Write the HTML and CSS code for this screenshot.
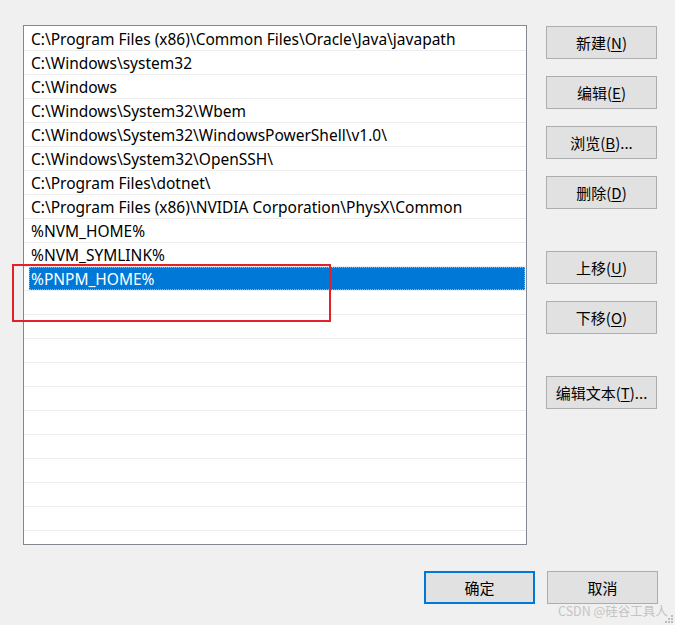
FILE: index.html
```html
<!DOCTYPE html>
<html lang="zh">
<head>
<meta charset="utf-8">
<link rel="stylesheet" href="styles.css">
</head>
<body>
<div class="dialog">
  <div class="main">
    <div class="list">
      <div class="row"><span class="item">C:\Program Files (x86)\Common Files\Oracle\Java\javapath</span></div>
      <div class="row"><span class="item">C:\Windows\system32</span></div>
      <div class="row"><span class="item">C:\Windows</span></div>
      <div class="row"><span class="item">C:\Windows\System32\Wbem</span></div>
      <div class="row"><span class="item">C:\Windows\System32\WindowsPowerShell\v1.0\</span></div>
      <div class="row"><span class="item">C:\Windows\System32\OpenSSH\</span></div>
      <div class="row"><span class="item">C:\Program Files\dotnet\</span></div>
      <div class="row"><span class="item">C:\Program Files (x86)\NVIDIA Corporation\PhysX\Common</span></div>
      <div class="row"><span class="item">%NVM_HOME%</span></div>
      <div class="row"><span class="item">%NVM_SYMLINK%</span></div>
      <div class="row"><span class="item selected">%PNPM_HOME%</span></div>
      <div class="row"><span class="item"></span></div>
      <div class="row"><span class="item"></span></div>
      <div class="row"><span class="item"></span></div>
      <div class="row"><span class="item"></span></div>
      <div class="row"><span class="item"></span></div>
      <div class="row"><span class="item"></span></div>
      <div class="row"><span class="item"></span></div>
      <div class="row"><span class="item"></span></div>
      <div class="row"><span class="item"></span></div>
      <div class="row"><span class="item"></span></div>
      <div class="row last"><span class="item"></span></div>
    </div>
    <div class="side">
      <div class="group">
        <button class="btn">新建(<u>N</u>)</button>
        <button class="btn">编辑(<u>E</u>)</button>
        <button class="btn">浏览(<u>B</u>)...</button>
        <button class="btn">删除(<u>D</u>)</button>
      </div>
      <div class="group">
        <button class="btn">上移(<u>U</u>)</button>
        <button class="btn">下移(<u>O</u>)</button>
      </div>
      <div class="group">
        <button class="btn">编辑文本(<u>T</u>)...</button>
      </div>
    </div>
  </div>
  <div class="footer">
    <button class="btn primary">确定</button>
    <button class="btn">取消</button>
  </div>
  <div class="highlight-box"></div>
  <div class="watermark">CSDN @硅谷工具人</div>
  <div class="grip">
    <i></i><i></i><i></i><i></i><i></i><i></i>
  </div>
</div>
</body>
</html>
```

FILE: styles.css
```css
* { box-sizing: border-box; }
html, body {
  margin: 0;
  padding: 0;
  background: #f0f0f0;
}
body {
  width: 675px;
  height: 625px;
  overflow: hidden;
  font-family: "Noto Sans", "Noto Sans CJK SC", sans-serif;
  color: #000;
}
.dialog {
  position: relative;
  width: 675px;
  height: 625px;
  padding: 25px 0 0 23px;
}
.main {
  display: flex;
  align-items: flex-start;
}
.list {
  width: 504px;
  height: 520px;
  border: 1px solid #828790;
  background: #fff;
  padding-top: 1px;
  overflow: hidden;
}
.row {
  height: 24px;
  border-bottom: 1px solid #ececec;
  display: flex;
  padding: 0 1px 0 5px;
}
.item {
  flex: 1;
  display: block;
  height: 23px;
  line-height: 24px;
  padding-left: 2px;
  font-size: 15.5px;
  white-space: nowrap;
  color: #000;
}
.item.selected {
  background: #0078d7;
  color: #fff;
  outline: 1px dotted #f0a060;
  outline-offset: -1px;
}
.side {
  margin-left: 19px;
  padding-top: 1px;
  display: flex;
  flex-direction: column;
  gap: 42px;
}
.group {
  display: flex;
  flex-direction: column;
  gap: 17px;
}
.btn {
  width: 111px;
  height: 33px;
  margin: 0;
  padding: 0;
  background: #e1e1e1;
  border: 1px solid #adadad;
  font-family: "Noto Sans CJK SC", "Noto Sans", sans-serif;
  font-size: 15px;
  color: #000;
  line-height: 31px;
  text-align: center;
}
.btn u {
  text-underline-offset: 2px;
}
.btn.primary {
  border: 2px solid #0078d7;
  line-height: 29px;
}
.footer {
  display: flex;
  gap: 12px;
  margin-top: 26px;
  margin-left: 401px;
}
.highlight-box {
  position: absolute;
  left: 12px;
  top: 264px;
  width: 319px;
  height: 58px;
  border: 2px solid #e3212b;
}
.watermark {
  position: absolute;
  left: 558px;
  top: 601px;
  font-family: "Noto Sans CJK SC", "Noto Sans", sans-serif;
  font-size: 12.5px;
  color: #c4c4c4;
  white-space: nowrap;
}
.grip {
  position: absolute;
  right: 2px;
  bottom: 2px;
  width: 9px;
  height: 9px;
}
.grip i {
  position: absolute;
  width: 2px;
  height: 2px;
  background: #bcbcbc;
}
.grip i:nth-child(1) { right: 0; bottom: 0; }
.grip i:nth-child(2) { right: 3px; bottom: 0; }
.grip i:nth-child(3) { right: 6px; bottom: 0; }
.grip i:nth-child(4) { right: 0; bottom: 3px; }
.grip i:nth-child(5) { right: 3px; bottom: 3px; }
.grip i:nth-child(6) { right: 0; bottom: 6px; }
```
